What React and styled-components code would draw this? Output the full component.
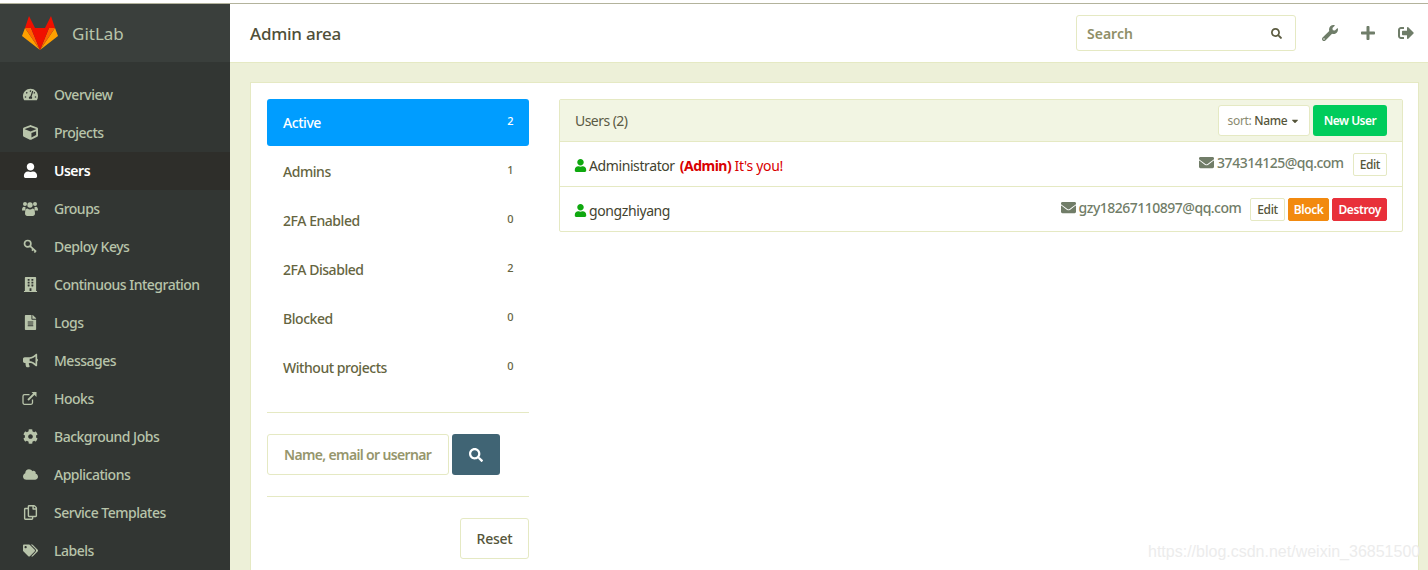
import React from "react";
import styled, { createGlobalStyle } from "styled-components";
import {
  FaTachometerAlt, FaCube, FaUser, FaBuilding, FaFileAlt, FaBullhorn, FaCog, FaCloud,
  FaRegCopy, FaTags, FaSearch, FaWrench, FaPlus, FaSignOutAlt, FaEnvelope, FaCaretDown,
} from "react-icons/fa";

const Global = createGlobalStyle`
  html, body { margin: 0; padding: 0; height: 570px; overflow: hidden; background: #fff; }
  * { box-sizing: border-box; }
  body { font-family: "Noto Sans", "Open Sans", sans-serif; font-size: 14px; color: #5c5c42; }
`;

const Page = styled.div`
  position: relative;
  width: 1428px;
  height: 570px;
  overflow: hidden;
  padding-top: 3px;
  display: flex;
  flex-direction: column;
`;
const TopLine = styled.div`
  height: 1px;
  flex: none;
  background: #b3b39c;
`;
const Body = styled.div`
  flex: 1;
  display: flex;
  min-height: 0;
`;
const Sidebar = styled.aside`
  width: 230px;
  flex: none;
  background: #323633;
  display: flex;
  flex-direction: column;
`;
const Brand = styled.div`
  height: 58px;
  background: #3a3f3c;
  padding-left: 22px;
  display: flex;
  align-items: center;
  gap: 14px;
  color: #b8c4aa;
  font-size: 17px;
`;
const NavList = styled.nav`
  padding-top: 14px;
`;
const NavItem = styled.div`
  height: 38px;
  padding: 0 0 2px 22px;
  display: flex;
  align-items: center;
  font-size: 14px;
  letter-spacing: -0.5px;
  color: ${(p) => (p.$active ? "#fff" : "#b8c4aa")};
  background: ${(p) => (p.$active ? "#2e2e2a" : "transparent")};
  font-weight: ${(p) => (p.$active ? 600 : 500)};
`;
const NavIcon = styled.span`
  width: 16px;
  margin-right: 16px;
  display: flex;
  justify-content: center;
  font-size: 15px;
`;
const Main = styled.main`
  flex: 1;
  min-width: 0;
  display: flex;
  flex-direction: column;
  background: #edf0d8;
`;
const Header = styled.header`
  height: 59px;
  flex: none;
  background: #fff;
  border-bottom: 1px solid #e5e9c3;
  padding: 0 14px 0 20px;
  display: flex;
  align-items: center;
`;
const Title = styled.h1`
  margin: 0;
  flex: 1;
  font-size: 17px;
  font-weight: 500;
  letter-spacing: -0.25px;
  color: #4f4f38;
`;
const SearchBox = styled.div`
  width: 220px;
  height: 36px;
  margin-right: 26px;
  padding: 0 13px 0 10px;
  border: 1px solid #e5e9c3;
  border-radius: 3px;
  display: flex;
  align-items: center;
  justify-content: space-between;
  color: #8f8f68;
  font-size: 14px;
  font-weight: 600;
  svg { font-size: 11px; color: #5c5c42; }
`;
const HeaderIcons = styled.div`
  display: flex;
  align-items: center;
  gap: 22px;
  color: #6f7d69;
  font-size: 16px;
  svg { display: block; }
`;
const Content = styled.div`
  flex: 1;
  min-height: 0;
  padding: 19px 9px 0 20px;
`;
const Panel = styled.section`
  height: 100%;
  background: #fff;
  border: 1px solid #e5e9c3;
  border-bottom: 0;
  padding: 16px 15px 0 16px;
  display: flex;
  gap: 30px;
`;
const Filters = styled.div`
  width: 262px;
  flex: none;
`;
const FilterList = styled.div`
  display: flex;
  flex-direction: column;
  gap: 2px;
`;
const FilterItem = styled.div`
  height: 47px;
  padding: 0 16px;
  border-radius: 3px;
  display: flex;
  align-items: center;
  justify-content: space-between;
  font-size: 14px;
  font-weight: 500;
  letter-spacing: -0.45px;
  background: ${(p) => (p.$active ? "#009dff" : "transparent")};
  color: ${(p) => (p.$active ? "#fff" : "#65653f")};
`;
const Count = styled.span`
  font-size: 11px;
  margin-top: -5px;
`;
const Rule = styled.hr`
  border: 0;
  border-top: 1px solid #e5e9c3;
  margin: 21px 0;
`;
const SearchRow = styled.div`
  display: flex;
  gap: 3px;
`;
const NameInput = styled.div`
  width: 182px;
  height: 41px;
  padding-left: 16px;
  border: 1px solid #e5e9c3;
  border-radius: 3px;
  display: flex;
  align-items: center;
  overflow: hidden;
  white-space: nowrap;
  color: #96966c;
  font-weight: 600;
  letter-spacing: -0.65px;
`;
const SearchButton = styled.div`
  width: 48px;
  height: 41px;
  border-radius: 3px;
  background: #406474;
  color: #fff;
  display: flex;
  align-items: center;
  justify-content: center;
  font-size: 14px;
`;
const ResetRow = styled.div`
  display: flex;
  justify-content: flex-end;
`;
const ResetButton = styled.div`
  width: 69px;
  height: 41px;
  border: 1px solid #e5e9c3;
  border-radius: 3px;
  display: flex;
  align-items: center;
  justify-content: center;
  color: #55553a;
  font-weight: 500;
  letter-spacing: -0.25px;
`;
const UsersColumn = styled.div`
  flex: 1;
  min-width: 0;
`;
const UsersBox = styled.div`
  border: 1px solid #e5e9c3;
  border-radius: 2px;
`;
const UsersHead = styled.div`
  height: 42px;
  background: #f2f5e3;
  border-bottom: 1px solid #e5e9c3;
  padding: 0 15px;
  display: flex;
  align-items: center;
  justify-content: space-between;
  letter-spacing: -0.55px;
  color: #5a5a44;
`;
const HeadActions = styled.div`
  display: flex;
  gap: 3px;
`;
const SortButton = styled.div`
  width: 92px;
  height: 31px;
  background: #fff;
  border: 1px solid #e5e9c3;
  border-radius: 3px;
  display: flex;
  align-items: center;
  justify-content: center;
  gap: 3px;
  font-size: 12px;
  letter-spacing: -0.35px;
  color: #8a8a70;
  b { font-weight: 500; color: #55553a; }
  svg { font-size: 10px; color: #55553a; }
`;
const NewUser = styled.div`
  width: 74px;
  height: 31px;
  background: #00cc5c;
  border-radius: 3px;
  display: flex;
  align-items: center;
  justify-content: center;
  color: #fff;
  font-size: 12px;
  font-weight: 600;
  letter-spacing: -0.5px;
`;
const UserRow = styled.div`
  height: ${(p) => (p.$first ? "44px" : "45px")};
  padding: 0 15px;
  display: flex;
  align-items: center;
  justify-content: space-between;
  border-top: ${(p) => (p.$first ? "0" : "1px solid #e5e9c3")};
`;
const UserName = styled.div`
  display: flex;
  align-items: center;
  gap: 2px;
  padding-top: 2px;
  color: #43432f;
  letter-spacing: -0.4px;
  svg { color: #0fa80f; font-size: 13px; margin-left: -1px; }
`;
const AdminMark = styled.span`
  color: #d90000;
  margin-left: 3px;
  letter-spacing: -0.3px;
  b { font-weight: 700; letter-spacing: -0.5px; }
`;
const RowActions = styled.div`
  display: flex;
  align-items: center;
  gap: 3px;
`;
const Email = styled.span`
  display: flex;
  align-items: center;
  gap: 3px;
  margin-right: 6px;
  margin-top: -3px;
  color: #717d68;
  font-weight: 500;
  letter-spacing: -0.5px;
  svg { font-size: 15px; }
`;
const SmallButton = styled.div`
  height: 23px;
  padding: 0 ${(p) => (p.$bg ? "5px" : "6px")};
  border-radius: 2px;
  display: flex;
  align-items: center;
  font-size: 12px;
  font-weight: ${(p) => (p.$bg ? 600 : 500)};
  letter-spacing: -0.4px;
  color: ${(p) => (p.$bg ? "#fff" : "#55553a")};
  background: ${(p) => p.$bg || "#fff"};
  border: 1px solid ${(p) => p.$bg || "#e5e9c3"};
`;
const Watermark = styled.div`
  position: absolute;
  left: 1148px;
  top: 543px;
  font-family: "Liberation Sans", sans-serif;
  font-size: 16px;
  color: #ececec;
  white-space: nowrap;
`;

const GitlabLogo = () => (
  <svg width="36" height="35" viewBox="0 0 36 35">
    <polygon points="0,20 3,12 18,34" fill="#ffa000" />
    <polygon points="36,20 33,12 18,34" fill="#ffa000" />
    <polygon points="3,12 9,12 18,34" fill="#ff6200" />
    <polygon points="33,12 27,12 18,34" fill="#ff6200" />
    <polygon points="9,12 27,12 18,34" fill="#f01000" />
    <polygon points="7,0 3,12 13,12" fill="#f01000" />
    <polygon points="29,0 33,12 23,12" fill="#f01000" />
  </svg>
);

const GroupIcon = () => (
  <svg width="16" height="15" viewBox="0 0 16 15" fill="currentColor">
    <circle cx="3" cy="3" r="2" />
    <circle cx="13" cy="3" r="2" />
    <circle cx="8" cy="4" r="2.7" />
    <path d="M0 9.5C0 7 .8 5.8 2 5.8c.6 0 1 .3 1.6.4-.3 1-.2 2.3.4 3.3H0z" />
    <path d="M16 9.5c0-2.5-.8-3.7-2-3.7-.6 0-1 .3-1.6.4.3 1 .2 2.3-.4 3.3h4z" />
    <path d="M3 12.5C3 9.5 3.8 7.5 5.5 7.5c.8.6 1.6.9 2.5.9s1.7-.3 2.5-.9c1.7 0 2.5 2 2.5 5 0 1.5-1 2.5-2.2 2.5H5.2C4 15 3 14 3 12.5z" />
  </svg>
);

const KeyIcon = () => (
  <svg width="15" height="15" viewBox="0 0 16 16" fill="none" stroke="currentColor">
    <circle cx="5" cy="5" r="3.4" strokeWidth="1.8" />
    <path d="M7.6 7.6L14 13.5M11 10.8l-1.5 1.5M13.5 13l-1.4 1.4" strokeWidth="1.8" />
  </svg>
);

const ExternalIcon = () => (
  <svg width="16" height="15" viewBox="0 0 16 15" fill="none" stroke="currentColor" strokeWidth="1.3">
    <path d="M10.5 8.5v3.3a1.5 1.5 0 0 1-1.5 1.5H2.5A1.5 1.5 0 0 1 1 11.8V5.2a1.5 1.5 0 0 1 1.5-1.5h5" />
    <path d="M6 9l7.5-7.5" strokeWidth="1.8" />
    <path d="M9.5 1h5v5z" fill="currentColor" stroke="none" />
  </svg>
);

const navItems = [
  { label: "Overview", icon: <FaTachometerAlt /> },
  { label: "Projects", icon: <FaCube /> },
  { label: "Users", icon: <FaUser />, active: true },
  { label: "Groups", icon: <GroupIcon /> },
  { label: "Deploy Keys", icon: <KeyIcon /> },
  { label: "Continuous Integration", icon: <FaBuilding /> },
  { label: "Logs", icon: <FaFileAlt /> },
  { label: "Messages", icon: <FaBullhorn /> },
  { label: "Hooks", icon: <ExternalIcon /> },
  { label: "Background Jobs", icon: <FaCog /> },
  { label: "Applications", icon: <FaCloud /> },
  { label: "Service Templates", icon: <FaRegCopy /> },
  { label: "Labels", icon: <FaTags /> },
];

const filters = [
  { label: "Active", count: 2, active: true },
  { label: "Admins", count: 1 },
  { label: "2FA Enabled", count: 0 },
  { label: "2FA Disabled", count: 2 },
  { label: "Blocked", count: 0 },
  { label: "Without projects", count: 0 },
];

export default function App() {
  return (
    <Page>
      <Global />
      <TopLine />
      <Body>
        <Sidebar>
          <Brand>
            <GitlabLogo />
            GitLab
          </Brand>
          <NavList>
            {navItems.map((item) => (
              <NavItem key={item.label} $active={item.active}>
                <NavIcon>{item.icon}</NavIcon>
                {item.label}
              </NavItem>
            ))}
          </NavList>
        </Sidebar>
        <Main>
          <Header>
            <Title>Admin area</Title>
            <SearchBox>
              Search
              <FaSearch />
            </SearchBox>
            <HeaderIcons>
              <FaWrench />
              <FaPlus />
              <FaSignOutAlt />
            </HeaderIcons>
          </Header>
          <Content>
            <Panel>
              <Filters>
                <FilterList>
                  {filters.map((f) => (
                    <FilterItem key={f.label} $active={f.active}>
                      {f.label}
                      <Count>{f.count}</Count>
                    </FilterItem>
                  ))}
                </FilterList>
                <Rule />
                <SearchRow>
                  <NameInput>Name, email or usernar</NameInput>
                  <SearchButton>
                    <FaSearch />
                  </SearchButton>
                </SearchRow>
                <Rule />
                <ResetRow>
                  <ResetButton>Reset</ResetButton>
                </ResetRow>
              </Filters>
              <UsersColumn>
                <UsersBox>
                  <UsersHead>
                    Users (2)
                    <HeadActions>
                      <SortButton>
                        sort: <b>Name</b>
                        <FaCaretDown />
                      </SortButton>
                      <NewUser>New User</NewUser>
                    </HeadActions>
                  </UsersHead>
                  <UserRow $first>
                    <UserName>
                      <FaUser />
                      Administrator
                      <AdminMark>
                        <b>(Admin)</b> It's you!
                      </AdminMark>
                    </UserName>
                    <RowActions>
                      <Email>
                        <FaEnvelope />
                        374314125@qq.com
                      </Email>
                      <SmallButton>Edit</SmallButton>
                    </RowActions>
                  </UserRow>
                  <UserRow>
                    <UserName>
                      <FaUser />
                      gongzhiyang
                    </UserName>
                    <RowActions>
                      <Email>
                        <FaEnvelope />
                        gzy18267110897@qq.com
                      </Email>
                      <SmallButton>Edit</SmallButton>
                      <SmallButton $bg="#f28a0f">Block</SmallButton>
                      <SmallButton $bg="#e8303a">Destroy</SmallButton>
                    </RowActions>
                  </UserRow>
                </UsersBox>
              </UsersColumn>
            </Panel>
          </Content>
        </Main>
      </Body>
      <Watermark>https://blog.csdn.net/weixin_36851500</Watermark>
    </Page>
  );
}
